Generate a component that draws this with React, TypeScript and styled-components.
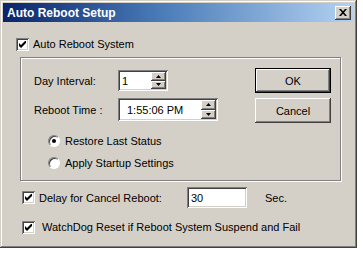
import styled, { createGlobalStyle } from 'styled-components';

const GlobalStyle = createGlobalStyle`
  body {
    margin: 0;
    background: #ffffff;
    font-family: "Liberation Sans", Arial, sans-serif;
    font-size: 11px;
    color: #000;
  }
`;

const raised = `
  box-shadow: inset -1px -1px #404040, inset 1px 1px #ffffff,
    inset -2px -2px #808080, inset 2px 2px #d4d0c8;
`;

const sunken = `
  box-shadow: inset 1px 1px #808080, inset -1px -1px #ffffff,
    inset 2px 2px #404040, inset -2px -2px #d4d0c8;
`;

const Window = styled.div`
  width: 357px;
  height: 248px;
  box-sizing: border-box;
  padding: 3px;
  background: #d4d0c8;
  box-shadow: inset -1px -1px #404040, inset 1px 1px #d4d0c8,
    inset -2px -2px #808080, inset 2px 2px #ffffff;
  display: flex;
  flex-direction: column;
`;

const TitleBar = styled.div`
  height: 19px;
  flex-shrink: 0;
  display: flex;
  align-items: center;
  justify-content: space-between;
  padding: 0 3px 0 4px;
  background: linear-gradient(90deg, #0a246a 0%, #4a7cb8 45%, #b4d2f2 100%);
  color: #fff;
  font-weight: bold;
  font-size: 12px;
`;

const CloseButton = styled.div`
  width: 16px;
  height: 14px;
  background: #d4d0c8;
  ${raised}
  display: flex;
  align-items: center;
  justify-content: center;
`;

const Body = styled.div`
  padding: 14px 0 0 13px;
  display: flex;
  flex-direction: column;
`;

const CheckRow = styled.label<{ $gap?: number; $top?: number; $left?: number }>`
  display: flex;
  align-items: center;
  height: 16px;
  gap: ${p => p.$gap ?? 4}px;
  margin-top: ${p => p.$top ?? 0}px;
  margin-left: ${p => p.$left ?? 0}px;
`;

const Box = styled.span`
  width: 13px;
  height: 13px;
  flex-shrink: 0;
  background: #fff;
  ${sunken}
  display: flex;
  align-items: center;
  justify-content: center;
`;

const Radio = styled.span<{ $on?: boolean }>`
  width: 12px;
  height: 12px;
  flex-shrink: 0;
  border-radius: 50%;
  background: #fff;
  border: 1px solid;
  border-color: #808080 #ffffff #ffffff #808080;
  box-sizing: border-box;
  box-shadow: inset 1px 1px #404040;
  display: flex;
  align-items: center;
  justify-content: center;
  &::after {
    content: '';
    width: 4px;
    height: 4px;
    border-radius: 50%;
    background: #000;
    display: ${p => (p.$on ? 'block' : 'none')};
  }
`;

const Group = styled.div`
  margin: 5px 0 0 4px;
  width: 321px;
  height: 124px;
  box-sizing: border-box;
  border: 1px solid #808080;
  box-shadow: 1px 1px 0 #ffffff, inset 1px 1px 0 #ffffff;
  display: flex;
`;

const Fields = styled.div`
  padding: 12px 0 0 13px;
  display: flex;
  flex-direction: column;
`;

const FieldRow = styled.div<{ $top?: number }>`
  display: flex;
  align-items: center;
  margin-top: ${p => p.$top ?? 0}px;
`;

const FieldLabel = styled.span<{ $w: number }>`
  width: ${p => p.$w}px;
  flex-shrink: 0;
`;

const Input = styled.div<{ $w: number; $h: number; $pad?: number }>`
  width: ${p => p.$w}px;
  height: ${p => p.$h}px;
  box-sizing: border-box;
  background: #fff;
  ${sunken}
  padding: 2px 2px 2px ${p => p.$pad ?? 4}px;
  display: flex;
  align-items: center;
`;

const InputText = styled.span`
  flex: 1;
`;

const Spin = styled.div`
  display: flex;
  flex-direction: column;
  width: 15px;
  height: 100%;
`;

const SpinButton = styled.div`
  flex: 1;
  background: #d4d0c8;
  ${raised}
  display: flex;
  align-items: center;
  justify-content: center;
`;

const Radios = styled.div`
  margin: 12px 0 0 14px;
  display: flex;
  flex-direction: column;
  gap: 6px;
`;

const Buttons = styled.div`
  margin: 10px 9px 0 auto;
  display: flex;
  flex-direction: column;
  gap: 5px;
`;

const Button = styled.div<{ $default?: boolean }>`
  width: 76px;
  height: 25px;
  box-sizing: border-box;
  background: #d4d0c8;
  display: flex;
  align-items: center;
  justify-content: center;
  ${p =>
    p.$default
      ? `border: 1px solid #000;
         box-shadow: inset -1px -1px #404040, inset 1px 1px #ffffff,
           inset -2px -2px #808080, inset 2px 2px #d4d0c8;`
      : raised}
`;

const Bottom = styled.div`
  padding-left: 6px;
  display: flex;
  flex-direction: column;
`;

const DelayRow = styled.div`
  display: flex;
  align-items: center;
  margin-top: 6px;
  height: 21px;
`;

const Unit = styled.span`
  margin-left: 18px;
`;

const Check = () => (
  <Box>
    <svg width="7" height="7" viewBox="0 0 7 7">
      <path d="M0 2 L2 4 L7 -1 L7 2 L2 7 L0 5 Z" fill="#000" />
    </svg>
  </Box>
);

const Arrow = ({ up }: { up?: boolean }) => (
  <svg width="5" height="3" viewBox="0 0 5 3">
    <path d={up ? 'M2.5 0 L5 3 L0 3 Z' : 'M0 0 L5 0 L2.5 3 Z'} fill="#000" />
  </svg>
);

const SpinButtons = () => (
  <Spin>
    <SpinButton>
      <Arrow up />
    </SpinButton>
    <SpinButton>
      <Arrow />
    </SpinButton>
  </Spin>
);

const App = () => (
  <>
    <GlobalStyle />
    <Window>
      <TitleBar>
        <span>Auto Reboot Setup</span>
        <CloseButton>
          <svg width="8" height="7" viewBox="0 0 8 7">
            <path d="M0 0 L2 0 L4 2.2 L6 0 L8 0 L5 3.5 L8 7 L6 7 L4 4.8 L2 7 L0 7 L3 3.5 Z" fill="#000" />
          </svg>
        </CloseButton>
      </TitleBar>
      <Body>
        <CheckRow>
          <Check />
          <span>Auto Reboot System</span>
        </CheckRow>
        <Group>
          <Fields>
            <FieldRow>
              <FieldLabel $w={84}>Day Interval:</FieldLabel>
              <Input $w={50} $h={21}>
                <InputText>1</InputText>
                <SpinButtons />
              </Input>
            </FieldRow>
            <FieldRow $top={7}>
              <FieldLabel $w={84}>Reboot Time :</FieldLabel>
              <Input $w={100} $h={23} $pad={9}>
                <InputText>1:55:06 PM</InputText>
                <SpinButtons />
              </Input>
            </FieldRow>
            <Radios>
              <CheckRow $gap={5}>
                <Radio $on />
                <span>Restore Last Status</span>
              </CheckRow>
              <CheckRow $gap={5}>
                <Radio />
                <span>Apply Startup Settings</span>
              </CheckRow>
            </Radios>
          </Fields>
          <Buttons>
            <Button $default>OK</Button>
            <Button>Cancel</Button>
          </Buttons>
        </Group>
        <Bottom>
          <DelayRow>
            <CheckRow>
              <Check />
              <FieldLabel $w={148}>Delay for Cancel Reboot:</FieldLabel>
            </CheckRow>
            <Input $w={60} $h={21}>
              <InputText>30</InputText>
            </Input>
            <Unit>Sec.</Unit>
          </DelayRow>
          <CheckRow $gap={7} $top={11}>
            <Check />
            <span>WatchDog Reset if Reboot System Suspend and Fail</span>
          </CheckRow>
        </Bottom>
      </Body>
    </Window>
  </>
);

export default App;
